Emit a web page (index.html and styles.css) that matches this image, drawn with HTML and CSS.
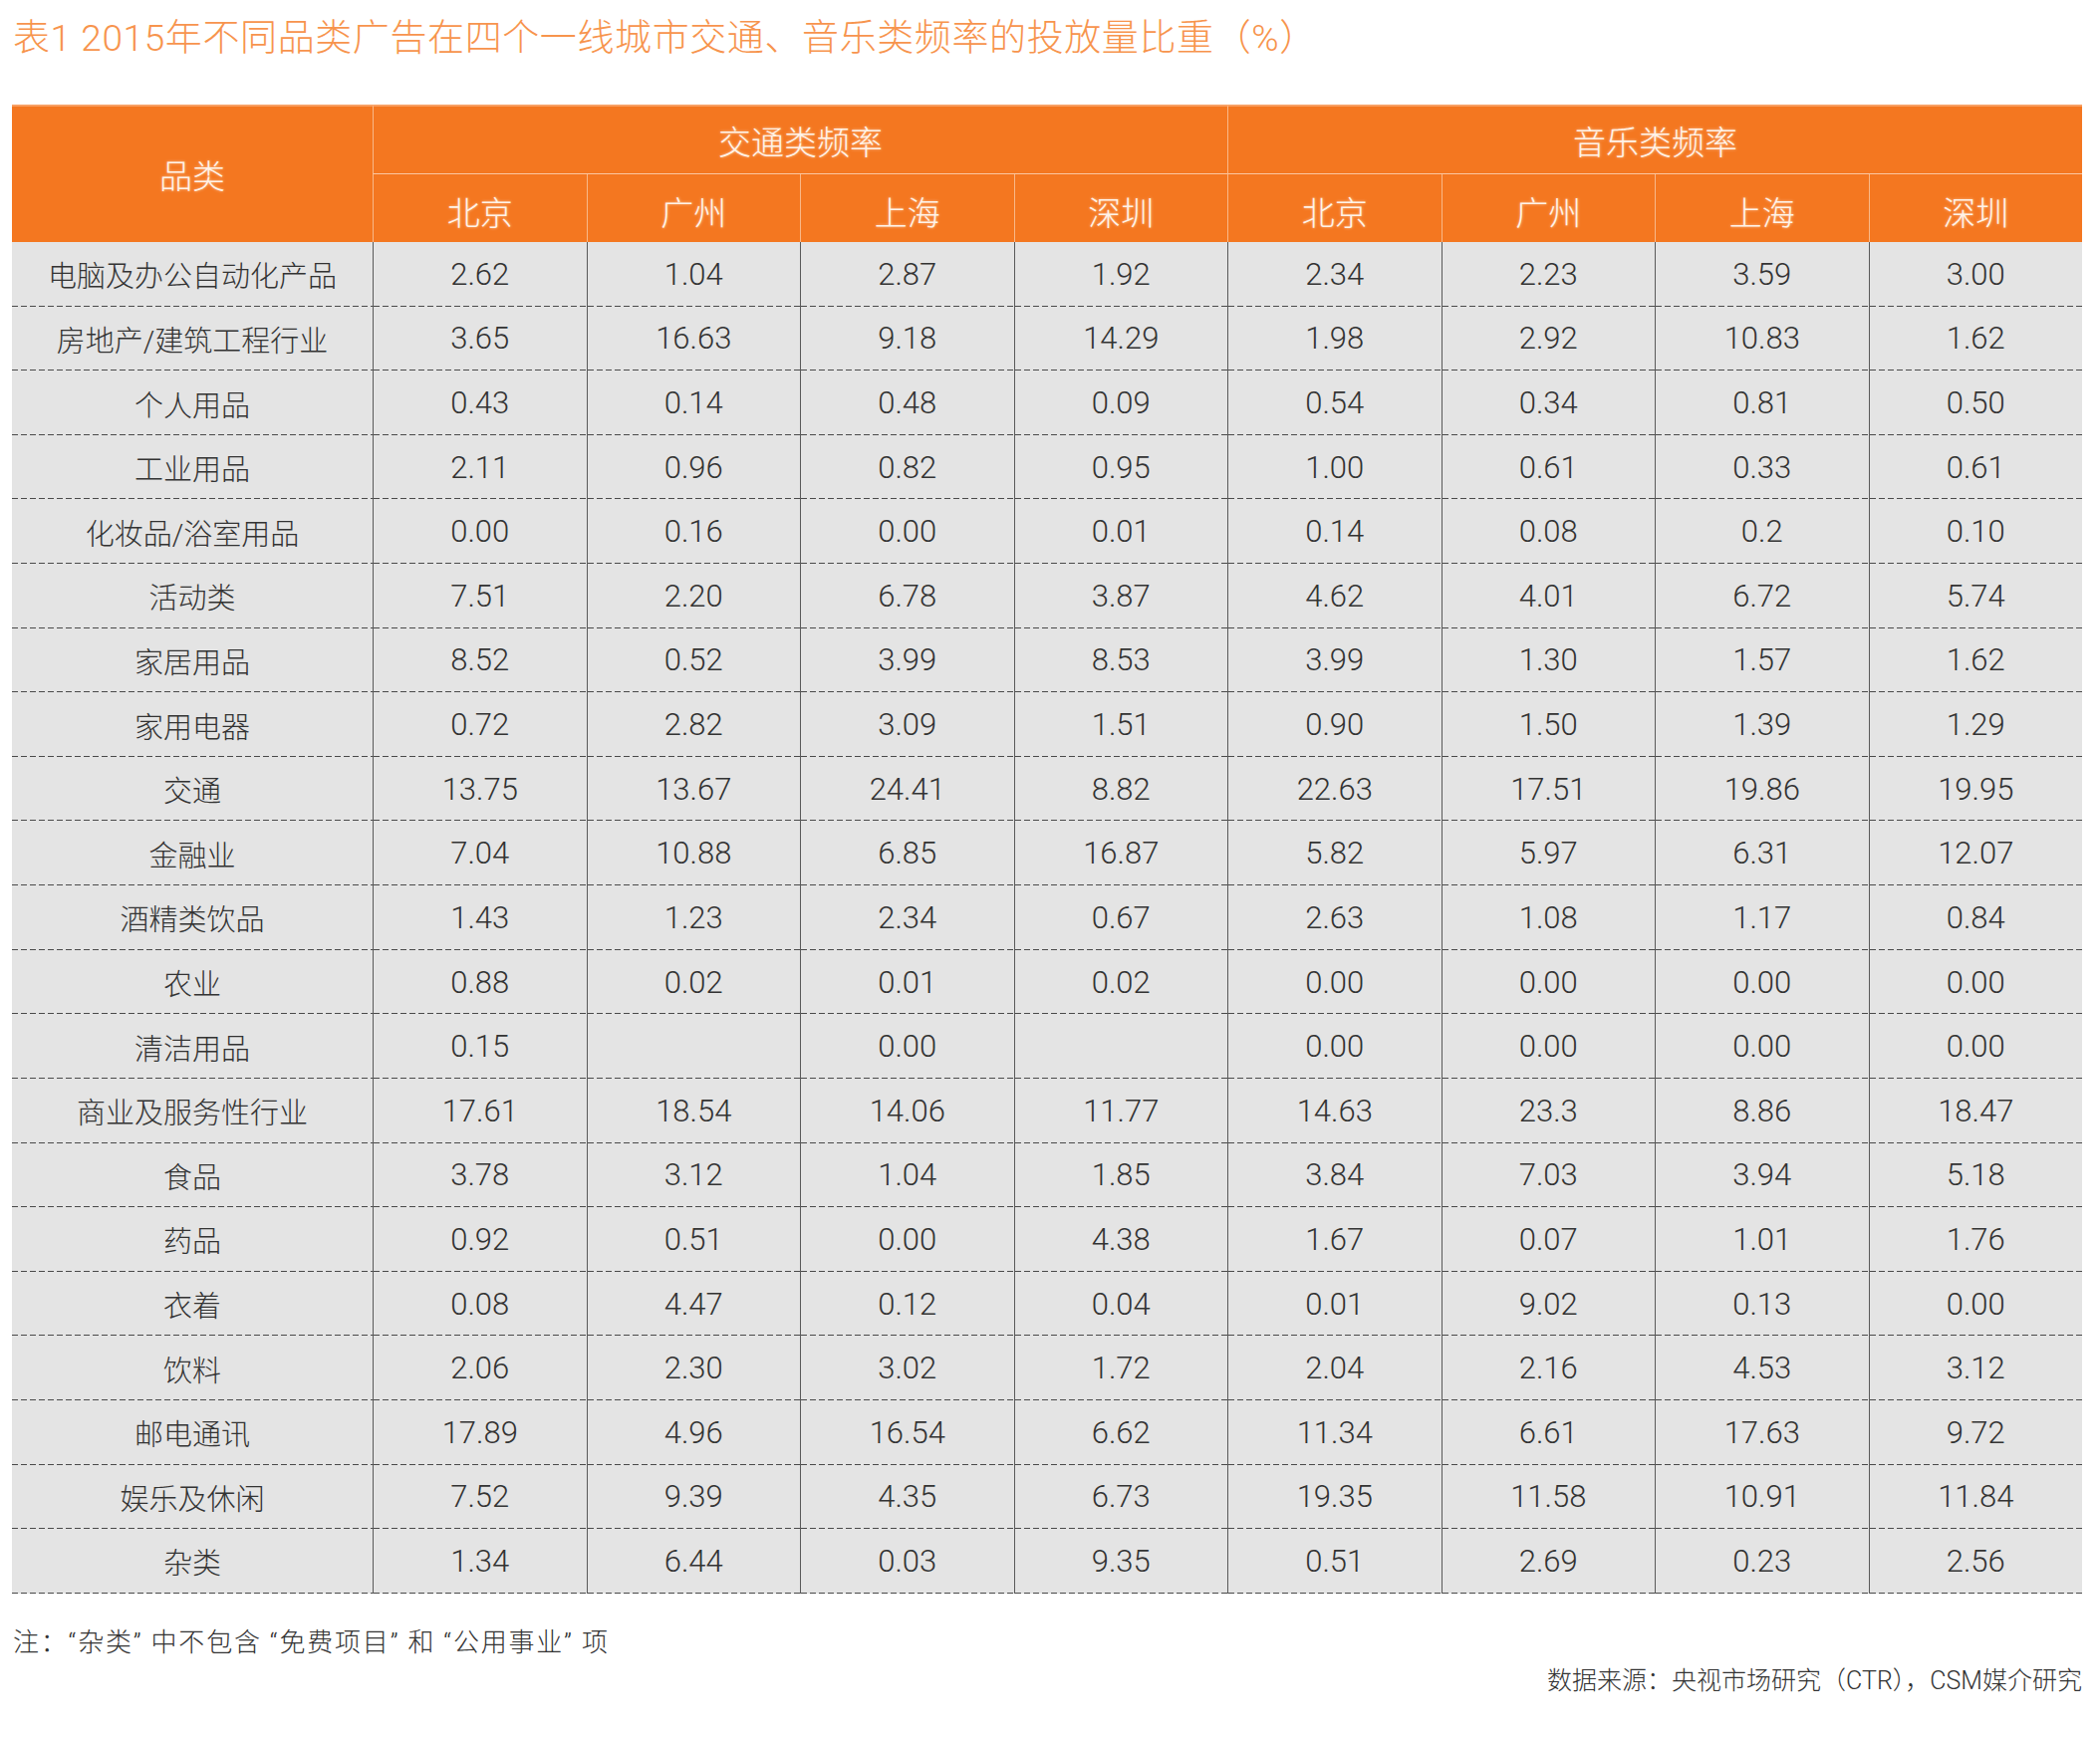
FILE: index.html
```html
<!DOCTYPE html>
<html lang="zh-CN">
<head>
<meta charset="utf-8">
<title>表1 2015年不同品类广告在四个一线城市交通、音乐类频率的投放量比重（%）</title>
<link rel="stylesheet" href="styles.css">
</head>
<body>
<div class="page">
  <h1 class="title">表1 2015年不同品类广告在四个一线城市交通、音乐类频率的投放量比重（%）</h1>
  <table class="data">
    <colgroup>
      <col class="c-cat">
      <col class="c-num"><col class="c-num"><col class="c-num"><col class="c-num">
      <col class="c-num"><col class="c-num"><col class="c-num"><col class="c-num">
    </colgroup>
    <thead>
      <tr class="h1">
        <th rowspan="2" class="h-cat">品类</th>
        <th colspan="4" class="h-group">交通类频率</th>
        <th colspan="4" class="h-group">音乐类频率</th>
      </tr>
      <tr class="h2">
        <th>北京</th><th>广州</th><th>上海</th><th>深圳</th>
        <th>北京</th><th>广州</th><th>上海</th><th>深圳</th>
      </tr>
    </thead>
    <tbody>
      <tr><td>电脑及办公自动化产品</td><td>2.62</td><td>1.04</td><td>2.87</td><td>1.92</td><td>2.34</td><td>2.23</td><td>3.59</td><td>3.00</td></tr>
      <tr><td>房地产/建筑工程行业</td><td>3.65</td><td>16.63</td><td>9.18</td><td>14.29</td><td>1.98</td><td>2.92</td><td>10.83</td><td>1.62</td></tr>
      <tr><td>个人用品</td><td>0.43</td><td>0.14</td><td>0.48</td><td>0.09</td><td>0.54</td><td>0.34</td><td>0.81</td><td>0.50</td></tr>
      <tr><td>工业用品</td><td>2.11</td><td>0.96</td><td>0.82</td><td>0.95</td><td>1.00</td><td>0.61</td><td>0.33</td><td>0.61</td></tr>
      <tr><td>化妆品/浴室用品</td><td>0.00</td><td>0.16</td><td>0.00</td><td>0.01</td><td>0.14</td><td>0.08</td><td>0.2</td><td>0.10</td></tr>
      <tr><td>活动类</td><td>7.51</td><td>2.20</td><td>6.78</td><td>3.87</td><td>4.62</td><td>4.01</td><td>6.72</td><td>5.74</td></tr>
      <tr><td>家居用品</td><td>8.52</td><td>0.52</td><td>3.99</td><td>8.53</td><td>3.99</td><td>1.30</td><td>1.57</td><td>1.62</td></tr>
      <tr><td>家用电器</td><td>0.72</td><td>2.82</td><td>3.09</td><td>1.51</td><td>0.90</td><td>1.50</td><td>1.39</td><td>1.29</td></tr>
      <tr><td>交通</td><td>13.75</td><td>13.67</td><td>24.41</td><td>8.82</td><td>22.63</td><td>17.51</td><td>19.86</td><td>19.95</td></tr>
      <tr><td>金融业</td><td>7.04</td><td>10.88</td><td>6.85</td><td>16.87</td><td>5.82</td><td>5.97</td><td>6.31</td><td>12.07</td></tr>
      <tr><td>酒精类饮品</td><td>1.43</td><td>1.23</td><td>2.34</td><td>0.67</td><td>2.63</td><td>1.08</td><td>1.17</td><td>0.84</td></tr>
      <tr><td>农业</td><td>0.88</td><td>0.02</td><td>0.01</td><td>0.02</td><td>0.00</td><td>0.00</td><td>0.00</td><td>0.00</td></tr>
      <tr><td>清洁用品</td><td>0.15</td><td></td><td>0.00</td><td></td><td>0.00</td><td>0.00</td><td>0.00</td><td>0.00</td></tr>
      <tr><td>商业及服务性行业</td><td>17.61</td><td>18.54</td><td>14.06</td><td>11.77</td><td>14.63</td><td>23.3</td><td>8.86</td><td>18.47</td></tr>
      <tr><td>食品</td><td>3.78</td><td>3.12</td><td>1.04</td><td>1.85</td><td>3.84</td><td>7.03</td><td>3.94</td><td>5.18</td></tr>
      <tr><td>药品</td><td>0.92</td><td>0.51</td><td>0.00</td><td>4.38</td><td>1.67</td><td>0.07</td><td>1.01</td><td>1.76</td></tr>
      <tr><td>衣着</td><td>0.08</td><td>4.47</td><td>0.12</td><td>0.04</td><td>0.01</td><td>9.02</td><td>0.13</td><td>0.00</td></tr>
      <tr><td>饮料</td><td>2.06</td><td>2.30</td><td>3.02</td><td>1.72</td><td>2.04</td><td>2.16</td><td>4.53</td><td>3.12</td></tr>
      <tr><td>邮电通讯</td><td>17.89</td><td>4.96</td><td>16.54</td><td>6.62</td><td>11.34</td><td>6.61</td><td>17.63</td><td>9.72</td></tr>
      <tr><td>娱乐及休闲</td><td>7.52</td><td>9.39</td><td>4.35</td><td>6.73</td><td>19.35</td><td>11.58</td><td>10.91</td><td>11.84</td></tr>
      <tr><td>杂类</td><td>1.34</td><td>6.44</td><td>0.03</td><td>9.35</td><td>0.51</td><td>2.69</td><td>0.23</td><td>2.56</td></tr>
    </tbody>
  </table>
  <p class="note">注：“杂类” 中不包含 “免费项目” 和 “公用事业” 项</p>
  <p class="source">数据来源：央视市场研究（CTR），CSM媒介研究</p>
</div>
</body>
</html>
```
FILE: styles.css
```css
* { box-sizing: border-box; }

html, body {
  margin: 0;
  padding: 0;
  background: #ffffff;
}

body {
  font-family: Roboto, "Liberation Sans", "Noto Sans CJK SC", sans-serif;
  font-weight: 300;
  color: #333333;
}

.page {
  width: 2108px;
  padding: 17px 18px 0 12px;
}

.title {
  margin: 0 0 44px 1px;
  font-size: 37px;
  line-height: 44px;
  font-weight: 300;
  color: #f7944d;
  letter-spacing: 0.6px;
  white-space: nowrap;
}

.data {
  width: 2078px;
  table-layout: fixed;
  border-collapse: separate;
  border-spacing: 0;
}

.c-cat { width: 362px; }
.c-num { width: 214.5px; }

.data th {
  background: #f47720;
  color: #fff3e8;
  font-weight: 300;
  font-size: 33px;
  padding: 0;
  text-align: center;
  text-shadow: 0 0 3px rgba(255, 236, 220, 0.7);
}

.h1 th {
  height: 70px;
  border-top: 2px solid #f8a063;
}

.h-cat {
  padding-bottom: 2px;
}

.h-group {
  border-left: 1px solid #f9b888;
  border-bottom: 1px solid #fbc7a2;
  padding-top: 4px;
}

.h2 th {
  height: 68px;
  border-left: 1px solid #f9b888;
  padding-top: 6px;
}

.data td {
  height: 64.62px;
  padding: 0;
  text-align: center;
  font-weight: 300;
  font-size: 31px;
  color: #333333;
  background-color: #e4e4e4;
  background-image: repeating-linear-gradient(to right, #4a4a4a 0 6px, transparent 6px 9px);
  background-size: 100% 1px;
  background-position: left bottom;
  background-repeat: no-repeat;
  border-left: 1px solid #5a5a5a;
}

.data td:first-child {
  border-left: none;
  font-size: 29px;
}

.note {
  margin: 33px 0 0 1px;
  font-size: 26px;
  line-height: 32px;
  font-weight: 300;
  letter-spacing: 1.8px;
  color: #333333;
}

.source {
  margin: 7px 0 0 0;
  font-size: 25px;
  line-height: 32px;
  font-weight: 300;
  color: #333333;
  text-align: right;
}
```
